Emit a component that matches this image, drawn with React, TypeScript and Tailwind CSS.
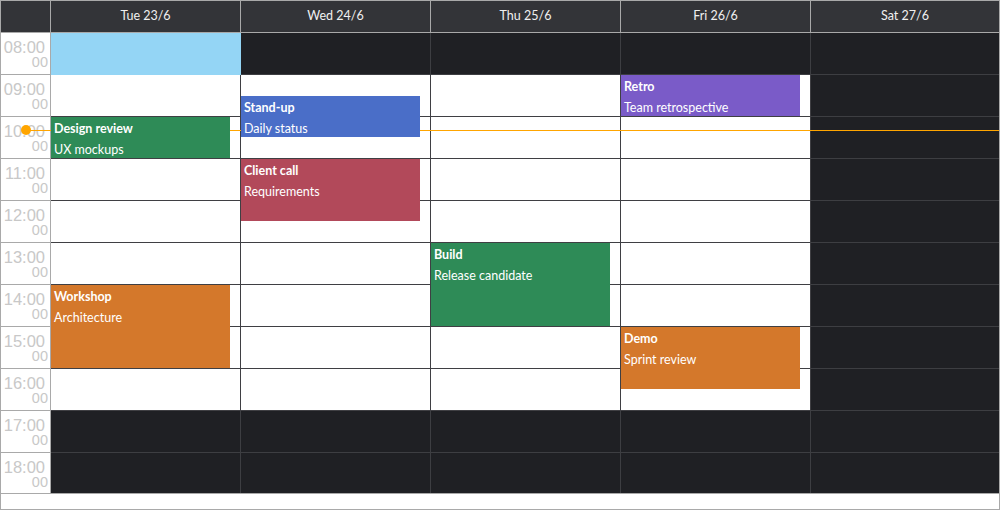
const hours = [8, 9, 10, 11, 12, 13, 14, 15, 16, 17, 18];

const days = [
  { label: "Tue 23/6", work: true },
  { label: "Wed 24/6", work: true },
  { label: "Thu 25/6", work: true },
  { label: "Fri 26/6", work: true },
  { label: "Sat 27/6", work: false },
];

type Ev = { day: number; start: number; end: number; title: string; text: string; color: string };

const events: Ev[] = [
  { day: 0, start: 10, end: 11, title: "Design review", text: "UX mockups", color: "bg-[#2e8b57]" },
  { day: 0, start: 14, end: 16, title: "Workshop", text: "Architecture", color: "bg-[#d4782b]" },
  { day: 1, start: 9.5, end: 10.5, title: "Stand-up", text: "Daily status", color: "bg-[#4a6ec8]" },
  { day: 1, start: 11, end: 12.5, title: "Client call", text: "Requirements", color: "bg-[#b2495a]" },
  { day: 2, start: 13, end: 15, title: "Build", text: "Release candidate", color: "bg-[#2e8b57]" },
  { day: 3, start: 9, end: 10, title: "Retro", text: "Team retrospective", color: "bg-[#7a5bc8]" },
  { day: 3, start: 15, end: 16.5, title: "Demo", text: "Sprint review", color: "bg-[#d4782b]" },
];

const ROW = 42;

function cellClass(dayIdx: number, h: number, last: boolean) {
  const work = days[dayIdx].work && h >= 9 && h < 17;
  let cls = last ? "h-[40px]" : "h-[42px] border-b";
  if (dayIdx < 4) cls += " border-r";
  if (dayIdx === 0 && h === 8) return cls + " bg-[#94d5f5] border-[#94d5f5]";
  return cls + (work ? " bg-white border-[#3f3f43]" : " bg-[#1f2024] border-[#3d3e42]");
}

export default function App() {
  return (
    <div className="w-[1000px] h-[510px] border border-[#a9a9a9] bg-white flex flex-col overflow-hidden font-['Lato',sans-serif]">
      {/* header */}
      <div className="h-[32px] flex border-b border-[#a9a9a9] bg-[#333438] text-[12.5px] text-[#f0f0f0]">
        <div className="w-[50px] shrink-0 border-r border-[#a9a9a9]" />
        {days.map((d, i) => (
          <div
            key={d.label}
            className={`flex items-center justify-center ${i < 4 ? "w-[190px] border-r border-[#a9a9a9]" : "flex-1"}`}
          >
            {d.label}
          </div>
        ))}
      </div>

      {/* body */}
      <div className="relative flex">
        <div className="w-[50px] shrink-0 border-r border-[#a9a9a9] flex flex-col">
          {hours.map((h, i) => (
            <div
              key={h}
              className={`flex flex-col items-end text-[#c8c8c8] font-['Liberation_Sans',sans-serif] ${i === hours.length - 1 ? "h-[40px]" : "h-[42px] border-b border-[#a9a9a9]"}`}
            >
              <span className="pr-[5px] pt-[4px] text-[16.5px] leading-[20px]">{String(h).padStart(2, "0")}:00</span>
              <span className="pr-[2px] -mt-[1px] text-[14.5px] leading-[13px]">00</span>
            </div>
          ))}
        </div>

        {days.map((d, di) => (
          <div key={d.label} className={`relative flex flex-col ${di < 4 ? "w-[190px]" : "flex-1"}`}>
            {hours.map((h, i) => (
              <div key={h} className={cellClass(di, h, i === hours.length - 1)} />
            ))}
            {events
              .filter((e) => e.day === di)
              .map((e) => (
                <div
                  key={e.title}
                  className={`absolute left-0 w-[179px] z-20 pl-[3px] pt-[1px] text-white text-[12.5px] leading-[21px] ${e.color}`}
                  style={{ top: (e.start - 8) * ROW, height: (e.end - e.start) * ROW - 1 }}
                >
                  <div className="font-bold">{e.title}</div>
                  <div>{e.text}</div>
                </div>
              ))}
          </div>
        ))}

        {/* current time */}
        <div className="absolute left-[25px] right-0 top-[97px] h-px bg-[#ffa500] z-10" />
        <div className="absolute left-[20px] top-[92px] w-[10px] h-[10px] rounded-full bg-[#ffa500] z-10" />
      </div>

      <div className="flex-1 border-t border-[#a9a9a9] bg-white" />
    </div>
  );
}
